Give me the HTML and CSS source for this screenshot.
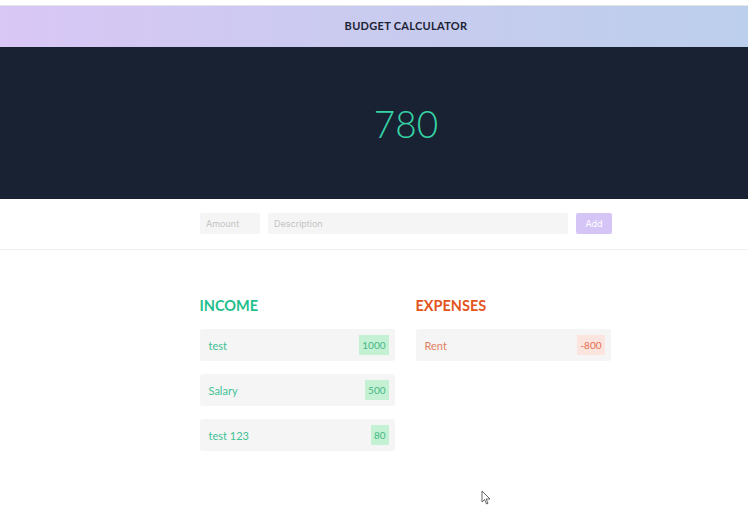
FILE: index.html
```html
<!DOCTYPE html>
<html lang="en">
<head>
    <meta charset="UTF-8">
    <meta name="viewport" content="width=device-width, initial-scale=1.0">
    <title>Budget Calculator</title>
    <link rel="stylesheet" href="styles.css">
</head>
<body>
    <div class="page">
        <header class="top">
            <h1>BUDGET CALCULATOR</h1>
        </header>
        <section class="balance">
            <div class="total">780</div>
        </section>
        <form class="add-form" onsubmit="return false">
            <input class="amount" type="text" placeholder="Amount">
            <input class="desc" type="text" placeholder="Description">
            <button type="submit">Add</button>
        </form>
        <main class="lists">
            <div class="col income">
                <h2>INCOME</h2>
                <div class="item"><span>test</span><span class="val">1000</span></div>
                <div class="item"><span>Salary</span><span class="val">500</span></div>
                <div class="item"><span>test 123</span><span class="val">80</span></div>
            </div>
            <div class="col expenses">
                <h2>EXPENSES</h2>
                <div class="item"><span>Rent</span><span class="val">-800</span></div>
            </div>
        </main>
        <svg class="cursor" width="12" height="16" viewBox="0 0 12 16">
            <path d="M1 1 L1 12 L3.5 9.5 L5.5 14 L7 13.3 L5.2 9 L9 9 Z" fill="#fff" stroke="#555" stroke-width="0.9"/>
        </svg>
    </div>
</body>
</html>
```

FILE: styles.css
```css
html {
    overflow: hidden;
}
body {
    margin: 0;
    padding: 0;
    background: #fff;
    font-family: Lato, "Noto Sans", sans-serif;
}
.page {
    position: relative;
    height: 518px;
    padding-top: 5px;
    box-sizing: border-box;
}
.top {
    height: 41px;
    border-top: 1px solid #e4e4ea;
    background: linear-gradient(to right, #d9c7f5, #c9cbef 50%, #bccfec);
    display: flex;
    align-items: center;
    justify-content: center;
    padding-left: 64px;
}
.top h1 {
    margin: 0 0 2px;
    font-size: 11px;
    font-weight: 700;
    letter-spacing: 0.3px;
    color: #1d2233;
}
.balance {
    height: 152px;
    background: #182233;
    display: flex;
    align-items: center;
    justify-content: center;
    padding-left: 64px;
}
.total {
    font-weight: 300;
    font-size: 37px;
    color: #35d3a5;
}
.add-form {
    display: flex;
    justify-content: center;
    gap: 8px;
    padding: 14px 0 15px 64px;
    border-bottom: 1px solid #f0f0f0;
}
.add-form input {
    border: none;
    background: #f5f5f5;
    height: 21px;
    padding: 0 6px;
    font-family: Inter, sans-serif;
    font-size: 9px;
    border-radius: 2px;
    outline: none;
    box-sizing: border-box;
}
.add-form input::placeholder {
    color: #c4c4c4;
}
.add-form .amount {
    width: 60px;
}
.add-form .desc {
    width: 300px;
}
.add-form button {
    width: 36px;
    height: 21px;
    border: none;
    border-radius: 2px;
    background: #d5c5f7;
    color: #fff;
    font-family: Inter, sans-serif;
    font-size: 9px;
    padding: 0;
}
.lists {
    display: flex;
    justify-content: center;
    gap: 21px;
    padding: 46px 0 0 62px;
}
.col {
    width: 195px;
}
.col h2 {
    margin: 0 0 13px;
    font-size: 14.5px;
    font-weight: 700;
    height: 20px;
    line-height: 20px;
}
.income h2 {
    color: #1fbf8d;
}
.expenses h2 {
    color: #e5531c;
}
.item {
    height: 32px;
    background: #f5f5f5;
    border-radius: 3px;
    margin-bottom: 13px;
    display: flex;
    align-items: center;
    justify-content: space-between;
    padding: 0 6px 0 9px;
    font-size: 11px;
}
.item .val {
    font-size: 10px;
    height: 20px;
    line-height: 20px;
    padding: 0 3px;
}
.income .item {
    color: #3fc294;
}
.income .val {
    background: #c4f1d4;
    color: #45b784;
}
.expenses .item {
    color: #e0805e;
}
.expenses .val {
    background: #fde5df;
    color: #e56c4e;
}
.cursor {
    position: absolute;
    left: 481px;
    top: 490px;
}
```
